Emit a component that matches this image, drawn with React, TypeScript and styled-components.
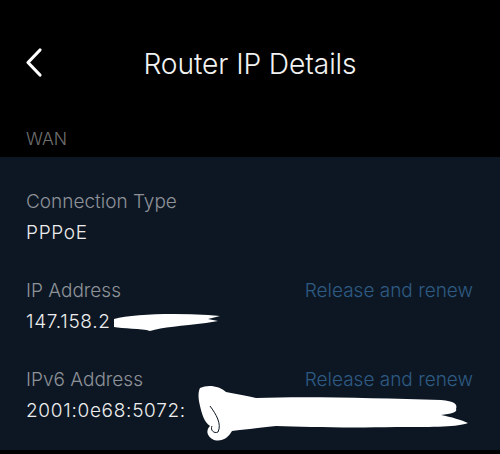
import React from "react";
import styled, { createGlobalStyle } from "styled-components";

const Global = createGlobalStyle`
  html, body { margin: 0; padding: 0; background: #000; }
  body { font-family: Inter, "Noto Sans", sans-serif; }
`;

const Screen = styled.div`
  width: 500px;
  height: 454px;
  background: #000;
  display: flex;
  flex-direction: column;
  overflow: hidden;
`;

const TopBar = styled.header`
  height: 128px;
  position: relative;
  display: flex;
  align-items: center;
  justify-content: center;
`;

const BackButton = styled.button`
  position: absolute;
  left: 24px;
  top: 47px;
  width: 20px;
  height: 32px;
  padding: 0;
  border: 0;
  background: none;
  display: flex;
`;

const Title = styled.h1`
  margin: 0;
  font-size: 28.2px;
  font-weight: 300;
  color: #f2f2f2;
  letter-spacing: -0.1px;
`;

const SectionLabel = styled.div`
  height: 29px;
  padding-left: 26px;
  font-size: 17.5px;
  font-weight: 300;
  color: #707070;
  line-height: 22px;
`;

const Panel = styled.section`
  flex: 0 0 293px;
  background: #0d1723;
  padding: 33px 27px 0 26px;
  display: flex;
  flex-direction: column;
  gap: 35px;
  box-sizing: border-box;
`;

const Row = styled.div`
  display: flex;
  justify-content: space-between;
  align-items: flex-start;
`;

const Field = styled.div`
  display: flex;
  flex-direction: column;
  gap: 8px;
`;

const Label = styled.div`
  font-size: 19px;
  font-weight: 300;
  line-height: 23px;
  color: #8d9299;
`;

const Value = styled.div`
  position: relative;
  font-size: 19px;
  font-weight: 300;
  line-height: 23px;
  letter-spacing: 0.7px;
  color: #ededed;
`;

const Link = styled.a`
  font-size: 19px;
  font-weight: 300;
  line-height: 23px;
  color: #2e5b84;
  text-decoration: none;
`;

const Scribble = styled.svg<{ $left: number; $top: number }>`
  position: absolute;
  left: ${(p) => p.$left}px;
  top: ${(p) => p.$top}px;
  overflow: visible;
`;

export default function App() {
  return (
    <>
      <Global />
      <Screen>
        <TopBar>
          <BackButton aria-label="Back">
            <svg width="20" height="32" viewBox="0 0 20 32">
              <polyline
                points="16,3 4,15.5 16,28"
                fill="none"
                stroke="#fff"
                strokeWidth="3.2"
                strokeLinecap="round"
                strokeLinejoin="round"
              />
            </svg>
          </BackButton>
          <Title>Router IP Details</Title>
        </TopBar>
        <SectionLabel>WAN</SectionLabel>
        <Panel>
          <Row>
            <Field>
              <Label>Connection Type</Label>
              <Value>PPPoE</Value>
            </Field>
          </Row>
          <Row>
            <Field>
              <Label>IP Address</Label>
              <Value>
                147.158.2
                <Scribble $left={86} $top={1} width="110" height="22" viewBox="0 0 110 22">
                  <path
                    d="M2,8 C20,3 60,2 96,4 L108,5 L96,8 L106,10 L94,12 C70,15 50,16 38,20 C30,17 10,18 2,16 Z"
                    fill="#fff"
                  />
                </Scribble>
              </Value>
            </Field>
            <Link href="#">Release and renew</Link>
          </Row>
          <Row>
            <Field>
              <Label>IPv6 Address</Label>
              <Value>
                2001:0e68:5072:
                <Scribble $left={170} $top={-15} width="275" height="58" viewBox="0 0 275 58">
                  <path
                    d="M4,4 C12,0 24,2 30,8 C40,10 52,12 60,14 C110,12 180,14 245,16 C258,17 262,20 260,25 C262,28 255,30 245,31 C255,33 266,36 272,39 C262,43 240,43 200,43 C150,44 110,43 80,42 C60,44 45,46 36,47 C32,54 26,58 18,56 C10,52 10,46 14,42 C8,38 6,30 4,22 C2,14 2,8 4,4 Z"
                    fill="#fff"
                  />
                  <path
                    d="M14,22 C20,30 26,40 22,48 C18,50 14,46 16,42"
                    fill="none"
                    stroke="#0d1723"
                    strokeWidth="1"
                  />
                </Scribble>
              </Value>
            </Field>
            <Link href="#">Release and renew</Link>
          </Row>
        </Panel>
      </Screen>
    </>
  );
}
